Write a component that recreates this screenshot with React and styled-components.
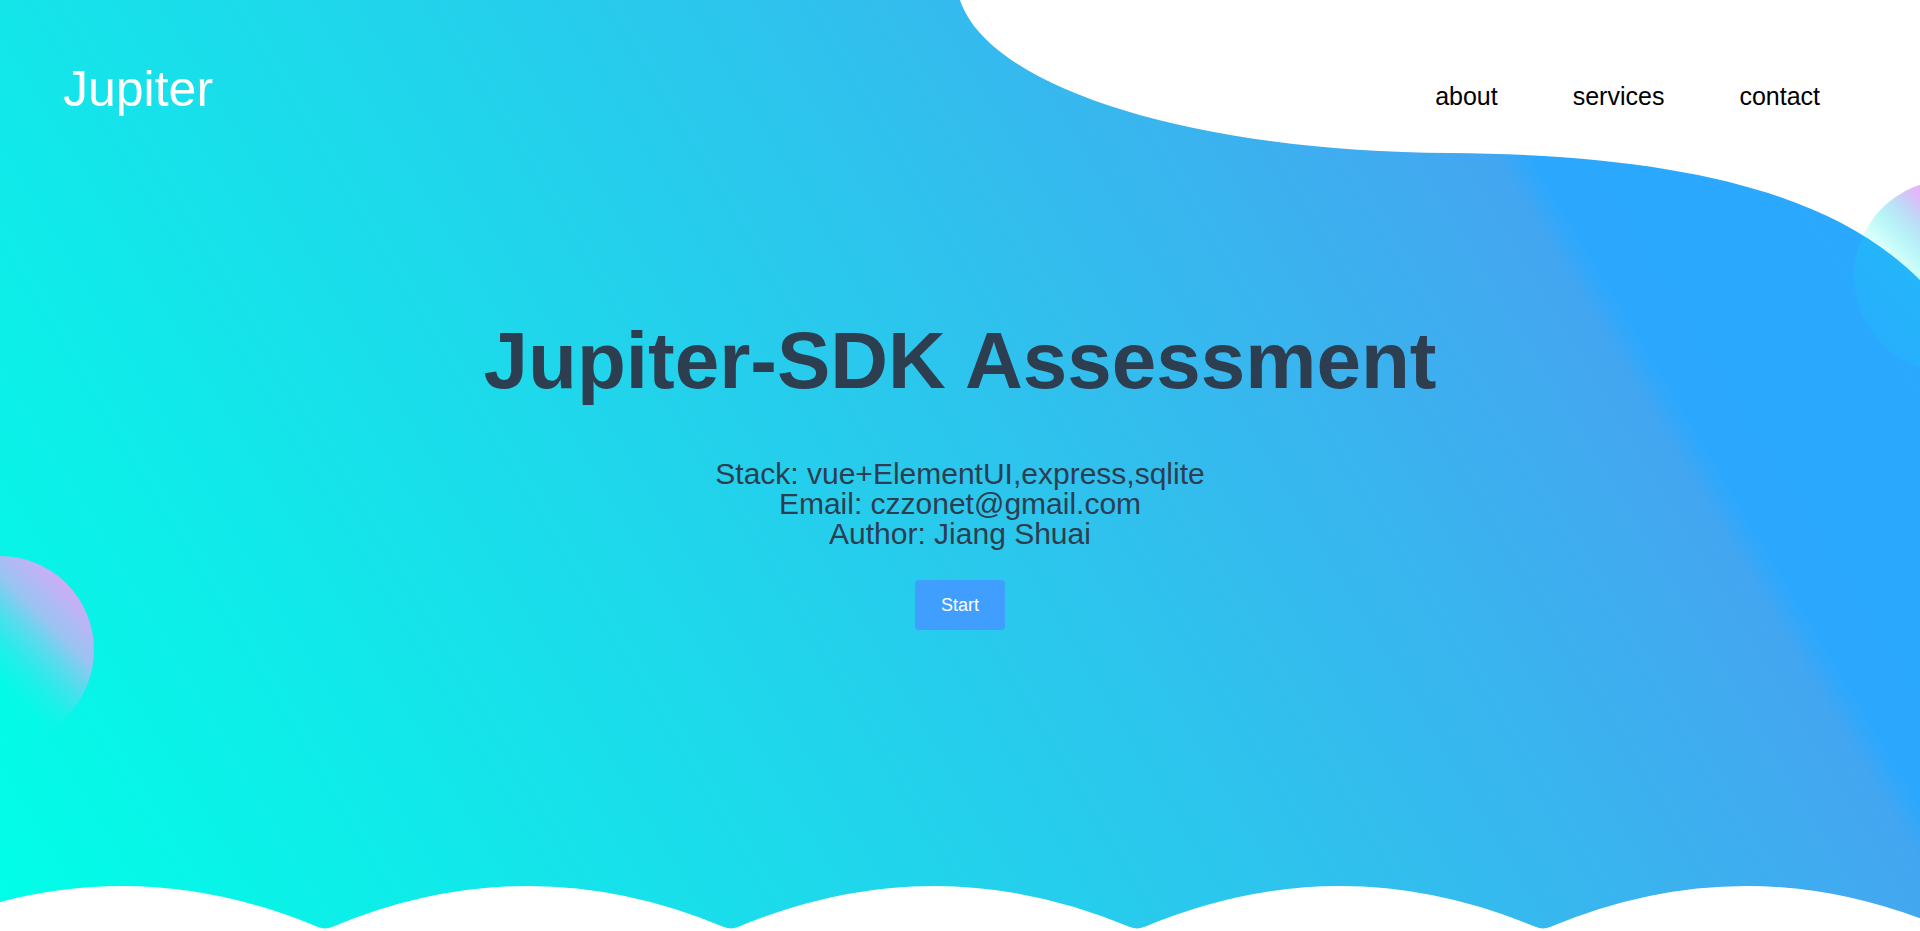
import React from 'react';
import styled, { createGlobalStyle } from 'styled-components';

const GlobalStyle = createGlobalStyle`
  html, body {
    margin: 0;
    padding: 0;
    height: 100%;
    overflow: hidden;
  }
  body {
    font-family: "Liberation Sans", Arial, Helvetica, sans-serif;
    -webkit-font-smoothing: antialiased;
  }
  #root {
    height: 100%;
  }
`;

const Hero = styled.section`
  position: relative;
  height: 100vh;
  overflow: hidden;
  background: linear-gradient(
    59deg,
    #00ffe7 0%,
    #44a6f0 79%,
    #2ba8fe 80.5%,
    #2aa8ff 100%
  );
  color: #2c3e50;
`;

const Decor = styled.svg`
  position: absolute;
  left: 0;
  top: 0;
  width: 100%;
  height: 100%;
  pointer-events: none;
`;

const Layer = styled.div`
  position: relative;
  z-index: 1;
  display: flex;
  flex-direction: column;
  height: 100%;
`;

const Header = styled.header`
  display: flex;
  justify-content: space-between;
  align-items: flex-start;
  padding: 64px 100px 0 63px;
`;

const Logo = styled.div`
  font-size: 50px;
  line-height: 50px;
  color: #ffffff;
`;

const Nav = styled.nav`
  display: flex;
  gap: 75px;
  margin-top: 20px;
`;

const NavLink = styled.a`
  font-size: 25px;
  line-height: 25px;
  color: #000;
  text-decoration: none;
  cursor: pointer;
`;

const Main = styled.main`
  display: flex;
  flex-direction: column;
  align-items: center;
  text-align: center;
  padding-top: 207px;
`;

const Title = styled.h1`
  margin: 0;
  font-size: 80px;
  line-height: 80px;
  font-weight: 700;
  color: #2c3e50;
`;

const Info = styled.p`
  margin: 58px 0 0;
  font-size: 30px;
  line-height: 30px;
  color: #2c3e50;
`;

const StartButton = styled.button`
  margin-top: 31px;
  width: 90px;
  height: 50px;
  border: none;
  border-radius: 4px;
  background: #409eff;
  color: #fff;
  font-family: inherit;
  font-size: 18px;
  line-height: 50px;
  padding: 0;
  cursor: pointer;
`;

const wavePath = (() => {
  const a = 0.001068;
  const base = 886;
  const d = 196;
  const yEnd = base + a * d * d;
  const ctrl = base - a * d * d;
  const slope = 2 * a * d;
  const gap = 203 - d;
  const cy = yEnd + gap * slope;
  let s = '';
  for (let k = -1; k <= 5; k++) {
    const p = 122 + 406 * k;
    if (k === -1) s += `M ${p - d} 945 L ${p - d} ${yEnd.toFixed(2)}`;
    s += ` Q ${p} ${ctrl.toFixed(2)} ${p + d} ${yEnd.toFixed(2)}`;
    if (k < 5) s += ` Q ${p + 203} ${cy.toFixed(2)} ${p + 406 - d} ${yEnd.toFixed(2)}`;
    else s += ` L ${p + d} 945 Z`;
  }
  return s;
})();

const blobPath =
  'M 960 -2 L 960 0 C 990 90, 1200 152, 1450 153 C 1700 155, 1840 200, 1920 280 L 1930 290 L 1930 -2 Z';

function Background() {
  return (
    <Decor viewBox="0 0 1920 931" preserveAspectRatio="none" aria-hidden="true">
      <defs>
        <linearGradient id="bubbleLeft" x1="1" y1="0" x2="0" y2="1">
          <stop offset="0.1" stopColor="rgb(236,160,248)" stopOpacity="0.95" />
          <stop offset="0.3" stopColor="rgb(200,180,245)" stopOpacity="0.75" />
          <stop offset="0.6" stopColor="rgb(0,255,231)" stopOpacity="0.18" />
          <stop offset="1" stopColor="rgb(0,255,231)" stopOpacity="0.1" />
        </linearGradient>
        <linearGradient id="bubbleRight" x1="1" y1="0" x2="0" y2="1">
          <stop offset="0.2" stopColor="rgb(232,160,248)" stopOpacity="0.95" />
          <stop offset="0.38" stopColor="rgb(214,170,246)" stopOpacity="0.8" />
          <stop offset="0.6" stopColor="rgb(0,255,231)" stopOpacity="0.15" />
          <stop offset="1" stopColor="rgb(0,255,231)" stopOpacity="0.04" />
        </linearGradient>
      </defs>
      <path d={blobPath} fill="#ffffff" />
      <circle cx="1950" cy="276" r="96" fill="url(#bubbleRight)" />
      <circle cx="0" cy="650" r="94" fill="url(#bubbleLeft)" />
      <path d={wavePath} fill="#ffffff" />
    </Decor>
  );
}

export default function App() {
  return (
    <>
      <GlobalStyle />
      <Hero>
        <Background />
        <Layer>
          <Header>
            <Logo>Jupiter</Logo>
            <Nav>
              <NavLink>about</NavLink>
              <NavLink>services</NavLink>
              <NavLink>contact</NavLink>
            </Nav>
          </Header>
          <Main>
            <Title>Jupiter-SDK Assessment</Title>
            <Info>
              Stack: vue+ElementUI,express,sqlite
              <br />
              Email: czzonet@gmail.com
              <br />
              Author: Jiang Shuai
            </Info>
            <StartButton>Start</StartButton>
          </Main>
        </Layer>
      </Hero>
    </>
  );
}
